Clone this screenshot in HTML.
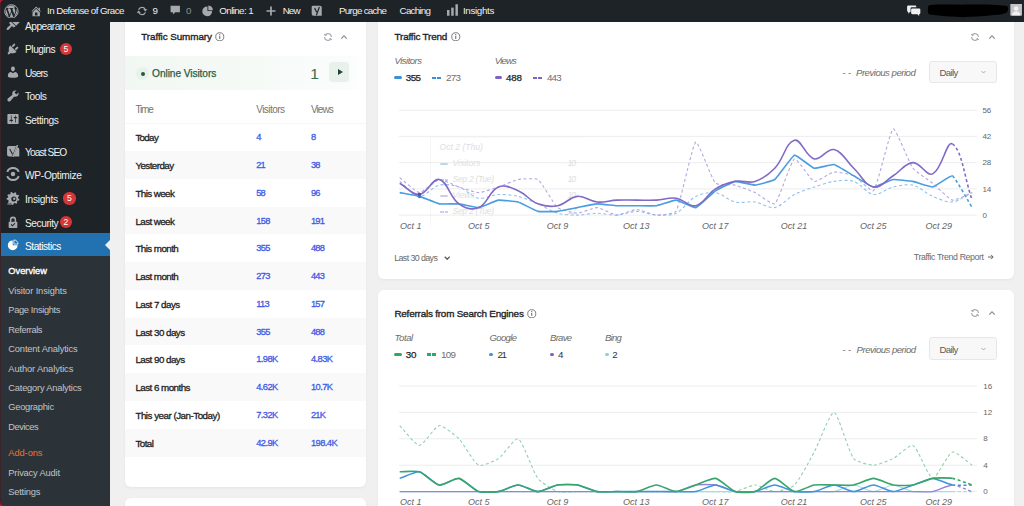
<!DOCTYPE html><html><head><meta charset="utf-8"><style>
*{margin:0;padding:0;box-sizing:border-box}
html,body{width:1024px;height:506px;overflow:hidden;background:#f0f0f1;font-family:"Liberation Sans",sans-serif}
.t{position:absolute;white-space:nowrap;line-height:1.15}
.abs{position:absolute}
#bar{position:absolute;left:0;top:0;width:1024px;height:21.5px;background:#1d2327}
#side{position:absolute;left:0;top:21.5px;width:110px;height:485px;background:#1d2327}
#sub{position:absolute;left:0;top:256px;width:110px;height:250px;background:#2c3338}
.card{position:absolute;background:#fff;border-radius:6px;box-shadow:0 1px 3px rgba(0,0,0,.05)}
.bw{color:#f0f0f1}
.mi{color:#f0f0f1}
.si{color:#c3c4c7}
.badge{position:absolute;width:12.4px;height:12.4px;border-radius:6.2px;background:#d63638;color:#fff;font-size:8.6px;line-height:12.4px;text-align:center}
.ttl{color:#1d2327;-webkit-text-stroke:.35px #1d2327}
.row{position:absolute;left:124.5px;width:241.5px;height:27.78px}
.lab{color:#1e1e1e;-webkit-text-stroke:.3px #1e1e1e}
.num{color:#3d5be6;-webkit-text-stroke:.3px #3d5be6}
.it{font-style:italic}
</style></head><body>
<div id="barwrap" style="position:absolute;left:0;top:0;width:1024px;height:22px;z-index:10"><div id="bar"></div>
<svg class="abs" style="left:4.4px;top:3.6px" width="14.8" height="14.8" viewBox="0 0 20 20"><circle cx="10" cy="10" r="9.1" fill="none" stroke="#a7aaad" stroke-width="1.3"/><path d="M8.010 14.820L4.960 6.610c.49-.03 1.050-.08 1.050-.08.43-.05.38-1.010-.06-.99 0 0-1.290.1-2.130.1-.15 0-.33 0-.52-.01C4.740 3.460 7.200 2.030 10 2.030c2.090 0 3.990.79 5.410 2.090-.6-.08-1.450.35-1.450 1.420 0 .66.38 1.220.79 1.880.31.54.5 1.220.5 2.210 0 1.340-1.270 4.480-1.270 4.480l-2.710-7.500c.48-.03.75-.16.75-.16.43-.05.38-1.100-.05-1.080 0 0-1.300.11-2.140.11-.78 0-2.110-.11-2.110-.11-.43-.02-.48 1.060-.05 1.080l.84.08 1.120 3.040zM14.030 16.970L16.640 10s.67-1.690.39-3.810c.63 1.140.94 2.420.94 3.810 0 2.960-1.560 5.580-3.940 6.970zM2.680 6.770L6.500 17.250C3.830 15.950 2.030 13.170 2.030 10c0-1.160.2-2.230.65-3.230zM10.130 11.300l2.290 6.250c-.75.27-1.570.42-2.420.42-.72 0-1.410-.11-2.060-.3z" fill="#a7aaad"/></svg>
<svg class="abs" style="left:29.6px;top:4.6px" width="12.4" height="12.4" viewBox="0 0 20 20"><path d="M16 8.500l1.530 1.530-1.060 1.060L10 4.620l-6.470 6.470-1.060-1.060L10 2.500l4 4v-2h2v4zm-6-2.460l6 5.990V18H4v-5.970zM12 17v-5H8v5h4z" fill="#a7aaad"/></svg>
<div class="t bw" style="left:47.00px;top:5.18px;font-size:9.8px;letter-spacing:-0.567px;">In Defense of Grace</div>
<svg class="abs" style="left:135.5px;top:5px" width="12" height="12" viewBox="0 0 20 20"><path d="M10 3a7 7 0 0 1 6.3 4H19l-3.5 4-3.5-4h2.1A5 5 0 0 0 5.2 8.5L3.4 7.6A7 7 0 0 1 10 3zM10 17a7 7 0 0 1-6.3-4H1l3.5-4 3.5 4H5.9a5 5 0 0 0 8.9-1.5l1.8.9A7 7 0 0 1 10 17z" fill="#a7aaad"/></svg>
<div class="t bw" style="left:152.60px;top:5.18px;font-size:9.8px;">9</div>
<svg class="abs" style="left:169.5px;top:5px" width="10.5" height="12" viewBox="0 0 18 20"><path d="M1 1h16v11H9l-4 4v-4H1z" fill="#a7aaad"/></svg>
<div class="t " style="left:186.00px;top:5.18px;font-size:9.8px;color:#8c8f94">0</div>
<svg class="abs" style="left:202px;top:5px" width="11.5" height="11.5" viewBox="0 0 20 20"><path d="M11 1a9 9 0 0 1 8 8h-8z" fill="#a7aaad"/><path d="M9.5 2.5v8h8A8.5 8.5 0 1 1 9.5 2.5z" fill="#a7aaad"/></svg>
<div class="t bw" style="left:219.30px;top:5.18px;font-size:9.8px;letter-spacing:-0.616px;">Online: 1</div>
<svg class="abs" style="left:265.5px;top:5.5px" width="10" height="10" viewBox="0 0 20 20"><path d="M8.3 1h3.4v7.3H19v3.4h-7.3V19H8.3v-7.3H1V8.3h7.3z" fill="#a7aaad"/></svg>
<div class="t bw" style="left:282.70px;top:5.18px;font-size:9.8px;letter-spacing:-0.903px;">New</div>
<svg class="abs" style="left:311.3px;top:4px" width="12" height="13" viewBox="0 0 20 22"><path d="M3 3h12a3 3 0 0 1 3 3v14H4a3 3 0 0 1-3-3V5a2 2 0 0 1 2-2z" fill="#a7aaad"/><path d="M6 7l3.5 7M14 5l-5 14" stroke="#1d2327" stroke-width="2" fill="none"/></svg>
<div class="t bw" style="left:339.00px;top:5.18px;font-size:9.8px;letter-spacing:-0.703px;">Purge cache</div>
<div class="t bw" style="left:399.60px;top:5.18px;font-size:9.8px;letter-spacing:-0.776px;">Caching</div>
<svg class="abs" style="left:446.5px;top:3.5px" width="11.5" height="12" viewBox="0 0 12 12"><rect x="0" y="6" width="2.6" height="6" fill="#a7aaad"/><rect x="4.4" y="3.5" width="2.6" height="8.5" fill="#a7aaad"/><rect x="8.8" y="0" width="2.6" height="12" fill="#a7aaad"/></svg>
<div class="t bw" style="left:463.00px;top:5.18px;font-size:9.8px;letter-spacing:-0.353px;">Insights</div>
<svg class="abs" style="left:906.5px;top:4.5px" width="14" height="11.5" viewBox="0 0 24 20"><path d="M2 1h12a2 2 0 0 1 2 2v1H8a2 2 0 0 0-2 2v6H5l-3 3v-3a2 2 0 0 1-2-2V3a2 2 0 0 1 2-2z" fill="#f0f0f1"/><path d="M9 6h12a2 2 0 0 1 2 2v6a2 2 0 0 1-2 2v3l-3-3H9a2 2 0 0 1-2-2V8a2 2 0 0 1 2-2z" fill="#f0f0f1"/></svg>
<svg class="abs" style="left:926px;top:3px" width="84" height="16" viewBox="0 0 84 16"><path d="M3 2.2C14 1.2 30 1.8 44 1.6 58 1.4 70 1.8 80 2.8 82.500 3.600 82.600 6 81.600 8.200 80.600 10.600 76 11.400 70 11.800 64 12.200 58 13.400 50 13.600 42 13.800 38 14.600 30 13.800 22 13.400 12 12.600 5 11.800 2 11.400 1.600 9 2 6.200 2.200 4 2 2.600 3 2.200z" fill="#000"/></svg>
<svg class="abs" style="left:1010px;top:4.2px" width="12.3" height="11.6" viewBox="0 0 12 12"><rect width="12" height="12" fill="#c3c4c7"/><circle cx="6" cy="4.6" r="2.4" fill="#f0f0f1"/><path d="M1.5 12c0-3 2-4.6 4.5-4.6s4.5 1.6 4.5 4.6z" fill="#f0f0f1"/></svg>
</div>
<div id="side"></div>
<div id="sub"></div>
<div class="abs" style="left:0;top:232.9px;width:110px;height:23.2px;background:#2271b1"></div>
<div class="abs" style="left:105px;top:239.5px;width:0;height:0;border-top:5px solid transparent;border-bottom:5px solid transparent;border-right:5px solid #f0f0f1"></div>
<div class="t mi" style="left:25.00px;top:20.92px;font-size:10.2px;letter-spacing:-0.523px;">Appearance</div>
<div class="t mi" style="left:25.00px;top:44.37px;font-size:10.2px;letter-spacing:-0.459px;">Plugins</div>
<div class="t mi" style="left:25.00px;top:67.72px;font-size:10.2px;letter-spacing:-0.884px;">Users</div>
<div class="t mi" style="left:25.00px;top:91.42px;font-size:10.2px;letter-spacing:-0.503px;">Tools</div>
<div class="t mi" style="left:25.00px;top:114.92px;font-size:10.2px;letter-spacing:-0.437px;">Settings</div>
<div class="t mi" style="left:25.00px;top:147.12px;font-size:10.2px;letter-spacing:-0.903px;">Yoast SEO</div>
<div class="t mi" style="left:25.00px;top:170.32px;font-size:10.2px;letter-spacing:-0.307px;">WP-Optimize</div>
<div class="t mi" style="left:25.00px;top:194.12px;font-size:10.2px;letter-spacing:-0.279px;">Insights</div>
<div class="t mi" style="left:25.00px;top:217.72px;font-size:10.2px;letter-spacing:-0.450px;">Security</div>
<div class="t mi" style="left:25.00px;top:241.22px;font-size:10.2px;letter-spacing:-0.479px;color:#fff">Statistics</div>
<div class="badge" style="left:59.8px;top:43px">5</div>
<div class="badge" style="left:63.2px;top:192.3px">5</div>
<div class="badge" style="left:59.8px;top:215.8px">2</div>
<svg class="abs" style="left:5.6px;top:18.0px" width="14" height="14" viewBox="0 0 20 20"><path d="M14.48 11.06L7.41 3.99l1.5-1.5c.5-.56 2.3-.47 3.51.32 1.21.8 1.43 1.28 2.91 2.1 1.18.64 2.45 1.26 4.45.85zm-.71.71L6.7 4.7 4.93 6.47c-.39.39-.39 1.02 0 1.41l1.06 1.06c.39.39.39 1.03 0 1.42-.6.6-1.43 1.110-2.21 1.69-.35.26-.7.53-1.01.84C1.43 14.23.4 16.08 1.2 16.89c.8.79 2.65-.25 4.03-1.62.29-.3.56-.63.81-.97.58-.79 1.09-1.64 1.7-2.25.39-.39 1.03-.39 1.42 0L10.22 13.1c.39.39 1.02.39 1.41 0z" fill="#a7aaad"/></svg>
<svg class="abs" style="left:5.6px;top:41.5px" width="14" height="14" viewBox="0 0 20 20"><path d="M13.11 4.36L9.87 7.6 8 5.73l3.24-3.24c.35-.34 1.05-.2 1.56.32.52.51.66 1.21.31 1.55zm-8 1.77l.91-1.12 9.01 9.01-1.19.84c-.71.71-2.63 1.16-3.82 1.16H6.14L4.9 17.26c-.59.59-1.54.59-2.12 0-.59-.58-.59-1.53 0-2.12l1.24-1.24v-3.88c0-1.130.4-3.19 1.09-3.89zm7.26 3.97l3.24-3.24c.34-.35 1.04-.21 1.55.31.52.51.66 1.21.31 1.55l-3.24 3.25z" fill="#a7aaad"/></svg>
<svg class="abs" style="left:5.6px;top:64.8px" width="14" height="14" viewBox="0 0 20 20"><path d="M10 9.25c-2.27 0-2.73-3.44-2.73-3.44C7 4.02 7.82 2 9.97 2c2.16 0 2.980 2.02 2.71 3.81 0 0-.41 3.44-2.68 3.44zm0 2.57L12.72 10c2.39 0 4.52 2.33 4.52 4.53v2.49s-3.65 1.13-7.24 1.13c-3.65 0-7.24-1.13-7.24-1.13v-2.49c0-2.25 1.94-4.48 4.47-4.48z" fill="#a7aaad"/></svg>
<svg class="abs" style="left:5.6px;top:88.5px" width="14" height="14" viewBox="0 0 20 20"><path d="M16.68 9.77c-1.34 1.34-3.3 1.67-4.95.99l-5.410 6.52c-.99.99-2.59.99-3.58 0s-.99-2.59 0-3.57l6.52-5.42c-.68-1.65-.35-3.61.99-4.95 1.28-1.28 3.12-1.62 4.72-1.06l-2.89 2.89 2.82 2.82 2.86-2.87c.53 1.58.18 3.39-1.08 4.65z" fill="#a7aaad"/></svg>
<svg class="abs" style="left:5.6px;top:112.0px" width="14" height="14" viewBox="0 0 20 20"><path d="M18 16V4c0-.55-.45-1-1-1H3c-.55 0-1 .45-1 1v12c0 .55.45 1 1 1h14c.55 0 1-.45 1-1zM8 11h1c.55 0 1 .45 1 1s-.45 1-1 1H8v1.5c0 .28-.22.5-.5.5s-.5-.22-.5-.5V13H6c-.55 0-1-.45-1-1s.45-1 1-1h1V5.5c0-.28.22-.5.5-.5s.5.22.5.5V11zm5-2h-1c-.55 0-1-.45-1-1s.45-1 1-1h1V5.5c0-.28.22-.5.5-.5s.5.22.5.5V7h1c.55 0 1 .45 1 1s-.45 1-1 1h-1v5.5c0 .28-.22.5-.5.5s-.5-.22-.5-.5V9z" fill="#a7aaad" fill-rule="evenodd"/></svg>
<svg class="abs" style="left:5.6px;top:144.2px" width="14" height="14" viewBox="0 0 20 20"><path d="M4 3h10.500L8.500 18H4.500A3 3 0 0 1 1.500 15V5.500A2.500 2.500 0 0 1 4 3zM16 5h.5A2.500 2.500 0 0 1 19 7.500V18H10.500z" fill="#a7aaad"/><path d="M5.300 7.200l4 7.600M16.200 1.500l-6.800 17.200" stroke="#1d2327" stroke-width="1.500" fill="none"/><path d="M15.300 1.500h2.200l-6.600 17h-2.100" fill="#a7aaad"/></svg>
<svg class="abs" style="left:5.6px;top:167.4px" width="14" height="14" viewBox="0 0 20 20"><path d="M1.800 7A8.800 8.800 0 0 1 18.200 7M18.200 13A8.800 8.800 0 0 1 1.800 13" fill="none" stroke="#a7aaad" stroke-width="2.800"/><circle cx="10" cy="10" r="3.200" fill="#a7aaad"/></svg>
<svg class="abs" style="left:5.6px;top:191.2px" width="14" height="14" viewBox="0 0 20 20"><path d="M17.20,10.40 L19.11,11.68 L18.65,13.55 L16.36,13.78 L15.52,15.03 L16.16,17.24 L14.60,18.37 L12.70,17.08 L11.25,17.49 L10.32,19.59 L8.40,19.46 L7.78,17.25 L6.40,16.64 L4.34,17.65 L2.95,16.31 L3.89,14.22 L3.23,12.86 L1.00,12.31 L0.80,10.40 L2.87,9.40 L3.23,7.94 L1.88,6.08 L2.95,4.49 L5.18,5.05 L6.40,4.16 L6.55,1.87 L8.40,1.34 L9.75,3.20 L11.25,3.31 L12.84,1.65 L14.60,2.43 L14.43,4.73 L15.52,5.77 L17.80,5.52 L18.65,7.25 L17.04,8.90Z" fill="#a7aaad"/><circle cx="11.200" cy="11.400" r="3.600" fill="#1d2327"/><circle cx="11.800" cy="11" r="1.700" fill="#a7aaad"/><path d="M2 18.500h8" stroke="#a7aaad" stroke-width="1.500"/></svg>
<svg class="abs" style="left:5.6px;top:214.8px" width="14" height="14" viewBox="0 0 20 20"><path d="M14.5 9.5h.8c.5 0 .9.4.9.9v7.200c0 .5-.4.9-.9.9H4.700c-.5 0-.9-.4-.9-.9v-7.2c0-.5.4-.9.9-.9h.8V6.800a4.500 4.500 0 0 1 9 0zm-2.200 0V6.800a2.300 2.300 0 0 0-4.6 0v2.700z" fill="#a7aaad"/><path d="M7.300 13.500l2 2 3.500-3.700" stroke="#1d2327" stroke-width="1.500" fill="none"/></svg>
<svg class="abs" style="left:5.6px;top:238.3px" width="14" height="14" viewBox="0 0 20 20"><path d="M11.300 8.700V2.800A5.900 5.900 0 0 1 17.200 8.700z" fill="none" stroke="#fff" stroke-width="1.200" stroke-linejoin="round"/><path d="M9.600 10.400V3.400A7 7 0 1 0 16.600 10.400z" fill="#fff"/></svg>
<div class="t " style="left:8.30px;top:266.24px;font-size:9.3px;letter-spacing:-0.008px;color:#fff;-webkit-text-stroke:.35px #fff">Overview</div>
<div class="t si" style="left:8.30px;top:285.84px;font-size:9.3px;letter-spacing:-0.114px;">Visitor Insights</div>
<div class="t si" style="left:8.30px;top:305.44px;font-size:9.3px;letter-spacing:-0.346px;">Page Insights</div>
<div class="t si" style="left:8.30px;top:324.84px;font-size:9.3px;letter-spacing:-0.441px;">Referrals</div>
<div class="t si" style="left:8.30px;top:344.44px;font-size:9.3px;letter-spacing:-0.154px;">Content Analytics</div>
<div class="t si" style="left:8.30px;top:363.84px;font-size:9.3px;letter-spacing:-0.112px;">Author Analytics</div>
<div class="t si" style="left:8.30px;top:382.64px;font-size:9.3px;letter-spacing:-0.207px;">Category Analytics</div>
<div class="t si" style="left:8.30px;top:402.34px;font-size:9.3px;letter-spacing:-0.254px;">Geographic</div>
<div class="t si" style="left:8.30px;top:421.84px;font-size:9.3px;letter-spacing:-0.463px;">Devices</div>
<div class="t " style="left:8.30px;top:448.14px;font-size:9.3px;letter-spacing:-0.073px;color:#f0712e">Add-ons</div>
<div class="t si" style="left:8.30px;top:467.84px;font-size:9.3px;letter-spacing:-0.172px;">Privacy Audit</div>
<div class="t si" style="left:8.30px;top:487.14px;font-size:9.3px;letter-spacing:-0.215px;">Settings</div>
<div class="card" style="left:124.5px;top:14px;width:241.5px;height:473px"></div>
<div class="card" style="left:124.5px;top:497.7px;width:241.5px;height:40px"></div>
<div class="t ttl" style="left:141.30px;top:30.89px;font-size:9.9px;letter-spacing:-0.090px;">Traffic Summary</div>
<svg class="abs" style="left:215px;top:31.8px" width="9.5" height="9.5" viewBox="0 0 20 20"><circle cx="10" cy="10" r="8.5" fill="none" stroke="#555" stroke-width="1.6"/><path d="M10 8.5v6" stroke="#555" stroke-width="2"/><circle cx="10" cy="5.6" r="1.2" fill="#555"/></svg>
<svg class="abs" style="left:322.7px;top:31.6px" width="10" height="10" viewBox="0 0 10 10"><path d="M2.100 3.300A3.400 3.400 0 0 1 8.400 5M7.900 6.700A3.400 3.400 0 0 1 1.600 5" fill="none" stroke="#a3a8ae" stroke-width="1.100"/><path d="M1.300 1.900l.9 1.700 1.600-.6M8.700 8.100l-.9-1.700-1.600.6" fill="none" stroke="#a3a8ae" stroke-width="1"/></svg>
<svg class="abs" style="left:339.7px;top:33.6px" width="8" height="6" viewBox="0 0 8 6"><path d="M1.200 4.600L4 1.800l2.800 2.800" fill="none" stroke="#8a9096" stroke-width="1.2"/></svg>
<div class="abs" style="left:124.5px;top:55.7px;width:241.5px;height:34px;background:linear-gradient(90deg,#f1f7f3 0%,#f6faf7 55%,#fbfdfc 94%,#fff 100%)"></div>
<div class="abs" style="left:136.2px;top:67.2px;width:12.8px;height:12.8px;border-radius:50%;background:#e8f2eb"></div>
<div class="abs" style="left:140.6px;top:71.6px;width:4px;height:4px;border-radius:50%;background:#1f5e40"></div>
<div class="t " style="left:152.10px;top:67.62px;font-size:10.2px;letter-spacing:-0.091px;color:#2a5e45;-webkit-text-stroke:.25px #2a5e45">Online Visitors</div>
<div class="t " style="left:310.30px;top:64.74px;font-size:15.5px;letter-spacing:-2.021px;color:#3b6a52">1</div>
<div class="abs" style="left:329.4px;top:61.6px;width:20px;height:20px;border-radius:3.5px;background:#e9f1ec"></div>
<div class="abs" style="left:337.5px;top:68.5px;width:0;height:0;border-top:3.2px solid transparent;border-bottom:3.2px solid transparent;border-left:5px solid #1e4a35"></div>
<div class="t " style="left:135.40px;top:103.90px;font-size:10px;letter-spacing:-1.117px;color:#757575">Time</div>
<div class="t " style="left:256.20px;top:103.90px;font-size:10px;letter-spacing:-0.529px;color:#757575">Visitors</div>
<div class="t " style="left:310.90px;top:103.90px;font-size:10px;letter-spacing:-0.899px;color:#757575">Views</div>
<div class="abs" style="left:124.5px;top:122.7px;width:241.5px;height:1px;background:#f6f6f6"></div>
<div class="t lab" style="left:135.40px;top:132.18px;font-size:9.8px;letter-spacing:-0.688px;">Today</div>
<div class="t num" style="left:256.20px;top:132.24px;font-size:9.3px;letter-spacing:-0.466px;">4</div>
<div class="t num" style="left:310.90px;top:132.24px;font-size:9.3px;letter-spacing:-0.466px;">8</div>
<div class="row" style="top:150.98px;background:#f9f9f9"></div>
<div class="t lab" style="left:135.40px;top:159.96px;font-size:9.8px;letter-spacing:-0.568px;">Yesterday</div>
<div class="t num" style="left:256.20px;top:160.02px;font-size:9.3px;letter-spacing:-0.931px;">21</div>
<div class="t num" style="left:310.90px;top:160.02px;font-size:9.3px;letter-spacing:-0.931px;">38</div>
<div class="t lab" style="left:135.40px;top:187.74px;font-size:9.8px;letter-spacing:-0.580px;">This week</div>
<div class="t num" style="left:256.20px;top:187.80px;font-size:9.3px;letter-spacing:-0.931px;">58</div>
<div class="t num" style="left:310.90px;top:187.80px;font-size:9.3px;letter-spacing:-0.931px;">96</div>
<div class="row" style="top:206.54px;background:#f9f9f9"></div>
<div class="t lab" style="left:135.40px;top:215.52px;font-size:9.8px;letter-spacing:-0.580px;">Last week</div>
<div class="t num" style="left:256.20px;top:215.58px;font-size:9.3px;letter-spacing:-0.698px;">158</div>
<div class="t num" style="left:310.90px;top:215.58px;font-size:9.3px;letter-spacing:-0.698px;">191</div>
<div class="t lab" style="left:135.40px;top:243.30px;font-size:9.8px;letter-spacing:-0.567px;">This month</div>
<div class="t num" style="left:256.20px;top:243.36px;font-size:9.3px;letter-spacing:-0.698px;">355</div>
<div class="t num" style="left:310.90px;top:243.36px;font-size:9.3px;letter-spacing:-0.698px;">488</div>
<div class="row" style="top:262.10px;background:#f9f9f9"></div>
<div class="t lab" style="left:135.40px;top:271.08px;font-size:9.8px;letter-spacing:-0.567px;">Last month</div>
<div class="t num" style="left:256.20px;top:271.14px;font-size:9.3px;letter-spacing:-0.698px;">273</div>
<div class="t num" style="left:310.90px;top:271.14px;font-size:9.3px;letter-spacing:-0.698px;">443</div>
<div class="t lab" style="left:135.40px;top:298.86px;font-size:9.8px;letter-spacing:-0.527px;">Last 7 days</div>
<div class="t num" style="left:256.20px;top:298.92px;font-size:9.3px;letter-spacing:-0.667px;">113</div>
<div class="t num" style="left:310.90px;top:298.92px;font-size:9.3px;letter-spacing:-0.698px;">157</div>
<div class="row" style="top:317.66px;background:#f9f9f9"></div>
<div class="t lab" style="left:135.40px;top:326.64px;font-size:9.8px;letter-spacing:-0.532px;">Last 30 days</div>
<div class="t num" style="left:256.20px;top:326.70px;font-size:9.3px;letter-spacing:-0.698px;">355</div>
<div class="t num" style="left:310.90px;top:326.70px;font-size:9.3px;letter-spacing:-0.698px;">488</div>
<div class="t lab" style="left:135.40px;top:354.42px;font-size:9.8px;letter-spacing:-0.532px;">Last 90 days</div>
<div class="t num" style="left:256.20px;top:354.48px;font-size:9.3px;letter-spacing:-0.547px;">1.98K</div>
<div class="t num" style="left:310.90px;top:354.48px;font-size:9.3px;letter-spacing:-0.547px;">4.83K</div>
<div class="row" style="top:373.22px;background:#f9f9f9"></div>
<div class="t lab" style="left:135.40px;top:382.20px;font-size:9.8px;letter-spacing:-0.540px;">Last 6 months</div>
<div class="t num" style="left:256.20px;top:382.26px;font-size:9.3px;letter-spacing:-0.547px;">4.62K</div>
<div class="t num" style="left:310.90px;top:382.26px;font-size:9.3px;letter-spacing:-0.547px;">10.7K</div>
<div class="t lab" style="left:135.40px;top:409.98px;font-size:9.8px;letter-spacing:-0.499px;">This year (Jan-Today)</div>
<div class="t num" style="left:256.20px;top:410.04px;font-size:9.3px;letter-spacing:-0.547px;">7.32K</div>
<div class="t num" style="left:310.90px;top:410.04px;font-size:9.3px;letter-spacing:-0.745px;">21K</div>
<div class="row" style="top:428.78px;background:#f9f9f9"></div>
<div class="t lab" style="left:135.40px;top:437.76px;font-size:9.8px;letter-spacing:-0.544px;">Total</div>
<div class="t num" style="left:256.20px;top:437.82px;font-size:9.3px;letter-spacing:-0.547px;">42.9K</div>
<div class="t num" style="left:310.90px;top:437.82px;font-size:9.3px;letter-spacing:-0.531px;">198.4K</div>
<div class="card" style="left:377.5px;top:14px;width:636.5px;height:265.3px"></div>
<div class="t ttl" style="left:394.60px;top:30.99px;font-size:9.9px;letter-spacing:-0.185px;">Traffic Trend</div>
<svg class="abs" style="left:451.3px;top:31.9px" width="9.5" height="9.5" viewBox="0 0 20 20"><circle cx="10" cy="10" r="8.5" fill="none" stroke="#555" stroke-width="1.6"/><path d="M10 8.5v6" stroke="#555" stroke-width="2"/><circle cx="10" cy="5.6" r="1.2" fill="#555"/></svg>
<svg class="abs" style="left:970.2px;top:31.5px" width="10" height="10" viewBox="0 0 10 10"><path d="M2.100 3.300A3.400 3.400 0 0 1 8.400 5M7.900 6.700A3.400 3.400 0 0 1 1.600 5" fill="none" stroke="#a3a8ae" stroke-width="1.100"/><path d="M1.300 1.900l.9 1.700 1.600-.6M8.700 8.100l-.9-1.700-1.600.6" fill="none" stroke="#a3a8ae" stroke-width="1"/></svg>
<svg class="abs" style="left:987.7px;top:33.5px" width="8" height="6" viewBox="0 0 8 6"><path d="M1.200 4.600L4 1.800l2.800 2.800" fill="none" stroke="#8a9096" stroke-width="1.2"/></svg>
<div class="t it" style="left:394.60px;top:56.26px;font-size:9.5px;letter-spacing:-0.511px;color:#6b6b6b">Visitors</div>
<div class="t it" style="left:494.80px;top:56.26px;font-size:9.5px;letter-spacing:-0.818px;color:#6b6b6b">Views</div>
<div class="abs" style="left:394.2px;top:76.40px;width:7.5px;height:2.6px;border-radius:1.5px;background:#3b8fd9"></div>
<div class="t " style="left:405.80px;top:71.98px;font-size:9.8px;letter-spacing:-0.576px;color:#1e1e1e;-webkit-text-stroke:.25px #1e1e1e">355</div>
<div class="abs" style="left:432.3px;top:76.60px;width:9.4px;height:2.2px;background:repeating-linear-gradient(90deg,#3b8fd9 0 4px,transparent 4px 5.3px)"></div>
<div class="t " style="left:446.00px;top:71.98px;font-size:9.8px;letter-spacing:-0.676px;color:#6e6e6e">273</div>
<div class="abs" style="left:494.6px;top:76.40px;width:7.5px;height:2.6px;border-radius:1.5px;background:#7d63c9"></div>
<div class="t " style="left:506.00px;top:71.98px;font-size:9.8px;letter-spacing:-0.176px;color:#1e1e1e;-webkit-text-stroke:.25px #1e1e1e">488</div>
<div class="abs" style="left:533.3px;top:76.60px;width:9.4px;height:2.2px;background:repeating-linear-gradient(90deg,#7d63c9 0 4px,transparent 4px 5.3px)"></div>
<div class="t " style="left:547.00px;top:71.98px;font-size:9.8px;letter-spacing:-0.876px;color:#6e6e6e">443</div>
<div class="t " style="left:842.60px;top:67.47px;font-size:9.6px;letter-spacing:-0.181px;color:#707070">- -</div>
<div class="t it" style="left:856.00px;top:67.47px;font-size:9.6px;letter-spacing:-0.493px;color:#6b6b6b">Previous period</div>
<div class="abs" style="left:929.3px;top:60.7px;width:68.2px;height:22.3px;border:1px solid #e6e7ea;border-radius:3px;background:#f8f8f9"></div>
<div class="t " style="left:939.40px;top:67.47px;font-size:9.6px;letter-spacing:-0.635px;color:#5a5a5a">Daily</div>
<svg class="abs" style="left:980.5px;top:70.2px" width="5" height="4" viewBox="0 0 5 4"><path d="M.5 1l2 2 2-2" fill="none" stroke="#999" stroke-width=".8"/></svg>
<svg class="abs" style="left:0;top:0" width="1024" height="506" viewBox="0 0 1024 506"><line x1="399" y1="215.1" x2="977" y2="215.1" stroke="#ededed" stroke-width="1"/><line x1="399" y1="188.9" x2="977" y2="188.9" stroke="#ededed" stroke-width="1"/><line x1="399" y1="162.7" x2="977" y2="162.7" stroke="#ededed" stroke-width="1"/><line x1="399" y1="136.4" x2="977" y2="136.4" stroke="#ededed" stroke-width="1"/><line x1="399" y1="110.2" x2="977" y2="110.2" stroke="#ededed" stroke-width="1"/></svg>
<div class="t " style="left:982.40px;top:210.74px;font-size:8.0px;color:#666">0</div>
<div class="t " style="left:982.40px;top:184.52px;font-size:8.0px;color:#666">14</div>
<div class="t " style="left:982.40px;top:158.30px;font-size:8.0px;color:#666">28</div>
<div class="t " style="left:982.40px;top:132.07px;font-size:8.0px;color:#666">42</div>
<div class="t " style="left:982.40px;top:105.85px;font-size:8.0px;color:#666">56</div>
<div class="t it" style="left:400.00px;top:220.72px;font-size:9.0px;color:#666">Oct 1</div>
<div class="t it" style="left:468.10px;top:220.72px;font-size:9.0px;color:#666">Oct 5</div>
<div class="t it" style="left:546.80px;top:220.72px;font-size:9.0px;color:#666">Oct 9</div>
<div class="t it" style="left:623.10px;top:220.72px;font-size:9.0px;color:#666">Oct 13</div>
<div class="t it" style="left:702.10px;top:220.72px;font-size:9.0px;color:#666">Oct 17</div>
<div class="t it" style="left:780.80px;top:220.72px;font-size:9.0px;color:#666">Oct 21</div>
<div class="t it" style="left:860.10px;top:220.72px;font-size:9.0px;color:#666">Oct 25</div>
<div class="t it" style="left:925.50px;top:220.72px;font-size:9.0px;color:#666">Oct 29</div>
<div class="abs" style="left:430.4px;top:136.6px;width:155px;height:89.5px;border-left:1px solid rgba(0,0,0,.03);border-top:1px solid rgba(0,0,0,.02)"></div>
<div class="t it" style="left:439.50px;top:143.09px;font-size:8.6px;letter-spacing:0.001px;color:#dedede">Oct 2 (Thu)</div>
<div class="t it" style="left:452.60px;top:159.29px;font-size:8.6px;letter-spacing:-0.048px;color:#dedede">Visitors</div>
<div class="t it" style="left:567.50px;top:159.29px;font-size:8.6px;letter-spacing:-0.966px;color:#dedede">10</div>
<div class="abs" style="left:439.5px;top:162.70px;width:8px;height:2.0px;border-radius:1.5px;background:#b9d9f3"></div>
<div class="t it" style="left:452.60px;top:175.24px;font-size:8.6px;letter-spacing:-0.327px;color:#dedede">Sep 2 (Tue)</div>
<div class="t it" style="left:567.50px;top:175.24px;font-size:8.6px;letter-spacing:-0.966px;color:#dedede">10</div>
<div class="abs" style="left:439.5px;top:178.65px;width:8px;height:2.0px;background:repeating-linear-gradient(90deg,#b9d9f3 0 4px,transparent 4px 5.3px)"></div>
<div class="t it" style="left:452.60px;top:191.19px;font-size:8.6px;letter-spacing:-0.221px;color:#dedede">Views</div>
<div class="t it" style="left:567.50px;top:191.19px;font-size:8.6px;letter-spacing:-0.966px;color:#dedede">10</div>
<div class="abs" style="left:439.5px;top:194.60px;width:8px;height:2.0px;border-radius:1.5px;background:#d3caf0"></div>
<div class="t it" style="left:452.60px;top:207.14px;font-size:8.6px;letter-spacing:-0.327px;color:#dedede">Sep 2 (Tue)</div>
<div class="t it" style="left:567.50px;top:207.14px;font-size:8.6px;letter-spacing:-0.966px;color:#dedede">12</div>
<div class="abs" style="left:439.5px;top:210.55px;width:8px;height:2.0px;background:repeating-linear-gradient(90deg,#d3caf0 0 4px,transparent 4px 5.3px)"></div>
<svg class="abs" style="left:0;top:0" width="1024" height="506" viewBox="0 0 1024 506"><g clip-path="url(#c1)"><path d="M399.70,181.39 C405.62,185.88 413.26,195.78 419.44,196.37 C425.10,196.91 432.86,186.63 439.18,185.13 C444.70,183.82 453.40,185.17 458.92,187.00 C465.24,189.11 472.38,197.05 478.66,198.24 C484.22,199.30 492.44,194.78 498.40,194.50 C504.28,194.22 512.40,195.01 518.14,196.37 C524.25,197.82 532.06,201.38 537.88,203.86 C543.90,206.43 551.41,211.46 557.62,213.23 C563.25,214.83 571.44,215.10 577.36,215.10 C583.28,215.10 591.18,213.23 597.10,213.23 C603.02,213.23 610.96,215.38 616.84,215.10 C622.80,214.82 630.66,211.35 636.58,211.35 C642.50,211.35 650.36,214.82 656.32,215.10 C662.20,215.38 670.93,215.66 676.06,213.23 C682.77,210.04 689.12,199.85 695.80,196.37 C700.97,193.67 709.87,191.82 715.54,192.62 C721.71,193.50 729.06,200.51 735.28,201.99 C740.90,203.32 749.21,201.16 755.02,201.99 C761.06,202.85 769.26,208.65 774.76,207.61 C781.11,206.40 788.24,197.77 794.50,194.50 C800.08,191.58 808.23,189.00 814.24,187.00 C820.08,185.07 827.94,182.25 833.98,181.39 C839.79,180.56 848.34,179.60 853.72,181.39 C860.18,183.53 867.20,193.61 873.46,194.50 C879.04,195.29 887.09,188.45 893.20,187.00 C898.94,185.64 907.42,183.82 912.94,185.13 C919.26,186.63 926.46,193.71 932.68,196.37 C938.30,198.77 946.68,202.53 952.42,201.99 C958.53,201.41 966.24,195.43 972.16,192.62" fill="none" stroke="#8ec2ee" stroke-width="1.1" stroke-dasharray="3 2.5" opacity="1"/><path d="M399.70,177.64 C402.66,179.89 416.41,192.48 419.44,192.62 C422.33,192.76 436.05,179.96 439.18,179.51 C441.97,179.12 455.92,186.01 458.92,187.00 C461.84,187.97 475.70,192.62 478.66,192.62 C481.62,192.62 495.48,187.97 498.40,187.00 C501.40,186.01 515.08,180.09 518.14,179.51 C521.00,178.97 535.72,177.97 537.88,179.51 C541.64,182.19 553.91,204.44 557.62,207.61 C559.84,209.50 574.40,213.23 577.36,213.23 C580.32,213.23 594.18,207.47 597.10,207.61 C600.10,207.75 613.84,214.96 616.84,215.10 C619.76,215.24 633.62,209.48 636.58,209.48 C639.54,209.48 653.33,214.96 656.32,215.10 C659.25,215.24 674.77,213.74 676.06,211.35 C680.69,202.79 692.18,144.63 695.80,142.05 C698.10,140.42 711.41,178.75 715.54,183.26 C717.33,185.21 732.41,184.45 735.28,185.13 C738.33,185.86 752.17,191.27 755.02,192.62 C758.09,194.08 772.89,205.46 774.76,203.86 C778.81,200.40 790.82,161.00 794.50,158.91 C796.74,157.63 810.82,180.25 814.24,181.39 C816.74,182.22 830.89,172.46 833.98,172.02 C836.82,171.62 851.07,174.51 853.72,175.77 C856.99,177.32 871.82,192.69 873.46,190.75 C877.75,185.67 889.67,130.95 893.20,128.94 C895.59,127.58 909.15,163.06 912.94,168.27 C915.07,171.21 929.79,180.93 932.68,183.26 C935.71,185.70 949.15,199.34 952.42,200.12 C955.08,200.75 969.20,193.75 972.16,192.62" fill="none" stroke="#b3a6e3" stroke-width="1.1" stroke-dasharray="3 2.5" opacity="1"/><path d="M399.70,192.62 C401.67,193.00 417.51,195.82 419.44,196.37 C421.46,196.95 437.14,203.47 439.18,203.86 C441.09,204.22 456.96,203.68 458.92,203.86 C460.91,204.05 476.73,207.79 478.66,207.61 C480.68,207.42 496.36,200.41 498.40,200.12 C500.31,199.84 516.26,201.45 518.14,201.99 C520.21,202.58 535.81,210.86 537.88,211.35 C539.75,211.80 555.66,211.54 557.62,211.35 C559.61,211.17 575.39,207.98 577.36,207.61 C579.33,207.23 595.11,203.96 597.10,203.86 C599.06,203.77 614.86,205.64 616.84,205.73 C618.81,205.83 634.61,205.73 636.58,205.73 C638.55,205.73 654.38,206.01 656.32,205.73 C658.33,205.45 674.11,200.02 676.06,200.12 C678.06,200.21 694.03,208.03 695.80,207.61 C697.98,207.09 713.40,192.17 715.54,190.75 C717.34,189.55 733.22,181.68 735.28,181.39 C737.17,181.12 753.07,185.22 755.02,185.13 C757.01,185.04 773.20,180.70 774.76,179.51 C777.15,177.70 792.25,155.80 794.50,155.16 C796.20,154.68 812.10,167.77 814.24,168.27 C816.05,168.70 832.13,164.18 833.98,164.53 C836.07,164.93 851.75,174.64 853.72,175.77 C855.69,176.89 871.41,186.81 873.46,187.00 C875.36,187.19 891.16,179.80 893.20,179.51 C895.11,179.24 911.00,181.02 912.94,181.39 C914.95,181.77 930.81,187.27 932.68,187.00 C934.75,186.71 950.93,174.99 952.42,175.77" fill="none" stroke="#4a9de0" stroke-width="1.6" stroke-linejoin="round" opacity="1"/><path d="M952.42,175.77 C954.88,177.05 970.19,204.42 972.16,207.61" fill="none" stroke="#4a9de0" stroke-width="1.6" stroke-dasharray="3 2.5" opacity="1"/><path d="M399.70,183.26 C407.60,187.75 411.89,195.21 419.44,194.50 C427.68,193.72 432.21,177.86 439.18,179.51 C448.00,181.60 449.30,197.01 458.92,203.86 C465.09,208.25 472.13,210.39 478.66,207.61 C487.93,203.65 489.13,190.96 498.40,187.00 C504.93,184.22 510.89,187.66 518.14,190.75 C526.69,194.40 529.28,200.60 537.88,203.86 C545.07,206.59 550.11,207.16 557.62,205.73 C565.90,204.16 569.22,197.14 577.36,196.37 C585.01,195.64 589.07,201.23 597.10,201.99 C604.86,202.73 608.93,200.49 616.84,200.12 C624.72,199.74 628.68,200.12 636.58,200.12 C644.48,200.12 648.44,200.49 656.32,200.12 C664.23,199.74 668.41,197.15 676.06,198.24 C684.20,199.40 688.72,207.42 695.80,205.73 C704.51,203.67 706.83,194.25 715.54,188.88 C722.62,184.51 727.12,182.93 735.28,181.39 C742.91,179.94 747.84,183.77 755.02,181.39 C763.64,178.52 768.31,175.01 774.76,168.27 C784.10,158.52 785.69,142.27 794.50,140.18 C801.48,138.52 805.48,156.83 814.24,158.91 C821.27,160.58 826.95,147.88 833.98,149.54 C842.74,151.62 845.82,160.78 853.72,168.27 C861.62,175.77 864.85,185.37 873.46,187.00 C880.64,188.37 885.47,180.53 893.20,175.77 C901.26,170.79 904.88,163.04 912.94,162.66 C920.67,162.29 926.56,176.80 932.68,173.89 C942.35,169.31 946.48,139.98 952.42,143.93" fill="none" stroke="#8169c6" stroke-width="1.6" stroke-linejoin="round" opacity="1"/><path d="M952.42,143.93 C962.27,150.47 964.26,177.64 972.16,200.12" fill="none" stroke="#8169c6" stroke-width="1.6" stroke-dasharray="3 2.5" opacity="1"/><circle cx="419.44" cy="194.50" r="1.8" fill="#5b43a8"/><circle cx="419.44" cy="196.37" r="1.8" fill="#2a7fc9"/></g><defs><clipPath id="c1"><rect x="390" y="100" width="600" height="120"/></clipPath></defs></svg>
<div class="t " style="left:394.20px;top:252.51px;font-size:8.9px;letter-spacing:-0.606px;color:#6a6a6a">Last 30 days</div>
<svg class="abs" style="left:443.8px;top:255.6px" width="6.4" height="4.4" viewBox="0 0 6.400 4.400"><path d="M.7 .8l2.500 2.500 2.500-2.500" fill="none" stroke="#555" stroke-width="1.200"/></svg>
<div class="t " style="left:913.80px;top:252.10px;font-size:8.8px;letter-spacing:-0.393px;color:#6a6a6a">Traffic Trend Report</div>
<svg class="abs" style="left:988px;top:254px" width="6" height="6" viewBox="0 0 6 6"><path d="M0 3h5M3 .8L5.2 3 3 5.2" fill="none" stroke="#555" stroke-width=".9"/></svg>
<div class="card" style="left:377.5px;top:290.1px;width:636.5px;height:240px"></div>
<div class="t ttl" style="left:394.40px;top:307.79px;font-size:9.9px;letter-spacing:-0.199px;">Referrals from Search Engines</div>
<svg class="abs" style="left:527.4px;top:308.5px" width="9.5" height="9.5" viewBox="0 0 20 20"><circle cx="10" cy="10" r="8.5" fill="none" stroke="#555" stroke-width="1.6"/><path d="M10 8.5v6" stroke="#555" stroke-width="2"/><circle cx="10" cy="5.6" r="1.2" fill="#555"/></svg>
<svg class="abs" style="left:970.3px;top:308.2px" width="10" height="10" viewBox="0 0 10 10"><path d="M2.100 3.300A3.400 3.400 0 0 1 8.400 5M7.900 6.700A3.400 3.400 0 0 1 1.600 5" fill="none" stroke="#a3a8ae" stroke-width="1.100"/><path d="M1.300 1.900l.9 1.700 1.600-.6M8.700 8.100l-.9-1.700-1.600.6" fill="none" stroke="#a3a8ae" stroke-width="1"/></svg>
<svg class="abs" style="left:987.8px;top:310.2px" width="8" height="6" viewBox="0 0 8 6"><path d="M1.200 4.600L4 1.800l2.800 2.800" fill="none" stroke="#8a9096" stroke-width="1.2"/></svg>
<div class="t it" style="left:394.40px;top:333.26px;font-size:9.5px;letter-spacing:-0.362px;color:#6b6b6b">Total</div>
<div class="t it" style="left:489.60px;top:333.26px;font-size:9.5px;letter-spacing:-0.647px;color:#6b6b6b">Google</div>
<div class="t it" style="left:550.00px;top:333.26px;font-size:9.5px;letter-spacing:-0.705px;color:#6b6b6b">Brave</div>
<div class="t it" style="left:605.00px;top:333.26px;font-size:9.5px;letter-spacing:-0.772px;color:#6b6b6b">Bing</div>
<div class="abs" style="left:394.4px;top:353.20px;width:7.2px;height:2.6px;border-radius:1.5px;background:#2ea868"></div>
<div class="t " style="left:405.70px;top:348.68px;font-size:9.8px;letter-spacing:-0.201px;color:#1e1e1e;-webkit-text-stroke:.25px #1e1e1e">30</div>
<div class="abs" style="left:427.4px;top:353.40px;width:9.2px;height:2.2px;background:repeating-linear-gradient(90deg,#2ea868 0 4px,transparent 4px 5.3px)"></div>
<div class="t " style="left:440.90px;top:348.68px;font-size:9.8px;letter-spacing:-0.626px;color:#6e6e6e">109</div>
<div class="abs" style="left:489.4px;top:353.40px;width:3.8px;height:2.2px;border-radius:1.5px;background:#3d93dc"></div>
<div class="t " style="left:497.50px;top:348.68px;font-size:9.8px;letter-spacing:-1.401px;color:#333">21</div>
<div class="abs" style="left:549.8px;top:353.40px;width:3.8px;height:2.2px;border-radius:1.5px;background:#7b60c6"></div>
<div class="t " style="left:557.90px;top:348.68px;font-size:9.8px;color:#333">4</div>
<div class="abs" style="left:604.8px;top:353.40px;width:3.8px;height:2.2px;border-radius:1.5px;background:#8fd0e0"></div>
<div class="t " style="left:612.30px;top:348.68px;font-size:9.8px;color:#333">2</div>
<div class="t " style="left:842.40px;top:343.87px;font-size:9.6px;letter-spacing:-0.181px;color:#707070">- -</div>
<div class="t it" style="left:856.60px;top:343.87px;font-size:9.6px;letter-spacing:-0.515px;color:#6b6b6b">Previous period</div>
<div class="abs" style="left:929.4px;top:337px;width:68.1px;height:22.7px;border:1px solid #e6e7ea;border-radius:3px;background:#f8f8f9"></div>
<div class="t " style="left:939.40px;top:343.87px;font-size:9.6px;letter-spacing:-0.635px;color:#5a5a5a">Daily</div>
<svg class="abs" style="left:980.5px;top:346.8px" width="5" height="4" viewBox="0 0 5 4"><path d="M.5 1l2 2 2-2" fill="none" stroke="#999" stroke-width=".8"/></svg>
<svg class="abs" style="left:0;top:0" width="1024" height="506" viewBox="0 0 1024 506"><line x1="399" y1="491.6" x2="977" y2="491.6" stroke="#ededed" stroke-width="1"/><line x1="399" y1="465.2" x2="977" y2="465.2" stroke="#ededed" stroke-width="1"/><line x1="399" y1="438.8" x2="977" y2="438.8" stroke="#ededed" stroke-width="1"/><line x1="399" y1="412.4" x2="977" y2="412.4" stroke="#ededed" stroke-width="1"/><line x1="399" y1="386.0" x2="977" y2="386.0" stroke="#ededed" stroke-width="1"/><path d="M399.70,425.60 C403.65,429.56 415.49,445.40 419.44,445.40 C423.39,445.40 434.91,426.31 439.18,425.60 C442.81,424.99 455.61,435.48 458.92,438.80 C463.51,443.40 473.82,462.77 478.66,465.20 C481.72,466.73 495.03,460.85 498.40,458.60 C502.93,455.57 515.08,437.27 518.14,438.80 C522.98,441.23 532.74,471.53 537.88,478.40 C540.64,482.09 553.31,490.16 557.62,491.60 C561.20,492.80 573.41,491.60 577.36,491.60 C581.31,491.60 593.15,491.60 597.10,491.60 C601.05,491.60 612.89,491.60 616.84,491.60 C620.79,491.60 632.63,491.60 636.58,491.60 C640.53,491.60 652.37,491.60 656.32,491.60 C660.27,491.60 672.11,491.60 676.06,491.60 C680.01,491.60 691.85,491.60 695.80,491.60 C699.75,491.60 711.59,491.60 715.54,491.60 C719.49,491.60 731.44,492.24 735.28,491.60 C739.33,490.92 751.07,485.00 755.02,485.00 C758.97,485.00 770.81,491.60 774.76,491.60 C778.71,491.60 791.73,487.78 794.50,485.00 C799.62,479.86 810.57,458.75 814.24,452.00 C818.46,444.23 830.28,411.78 833.98,412.40 C838.18,413.10 848.14,451.13 853.72,458.60 C856.03,461.69 869.51,465.20 873.46,465.20 C877.41,465.20 889.51,460.45 893.20,458.60 C897.41,456.49 909.93,443.89 912.94,445.40 C917.82,447.85 928.43,477.69 932.68,478.40 C936.32,479.01 947.83,453.53 952.42,452.00 C955.73,450.89 968.21,462.56 972.16,465.20" fill="none" stroke="#8fd1ad" stroke-width="1.1" stroke-dasharray="3 2.5" opacity="1"/><path d="M399.70,491.60 C403.65,491.60 415.49,491.60 419.44,491.60 C423.39,491.60 435.23,491.60 439.18,491.60 C443.13,491.60 454.97,491.60 458.92,491.60 C462.87,491.60 474.71,491.60 478.66,491.60 C482.61,491.60 494.45,491.60 498.40,491.60 C502.35,491.60 514.19,491.60 518.14,491.60 C522.09,491.60 533.93,491.60 537.88,491.60 C541.83,491.60 553.67,491.60 557.62,491.60 C561.57,491.60 573.41,491.60 577.36,491.60 C581.31,491.60 593.15,491.60 597.10,491.60 C601.05,491.60 612.89,491.60 616.84,491.60 C620.79,491.60 632.63,491.60 636.58,491.60 C640.53,491.60 652.37,491.60 656.32,491.60 C660.27,491.60 672.11,491.60 676.06,491.60 C680.01,491.60 691.85,491.60 695.80,491.60 C699.75,491.60 711.59,491.60 715.54,491.60 C719.49,491.60 731.33,491.60 735.28,491.60 C739.23,491.60 751.07,491.60 755.02,491.60 C758.97,491.60 770.81,491.60 774.76,491.60 C778.71,491.60 790.55,491.60 794.50,491.60 C798.45,491.60 810.29,491.60 814.24,491.60 C818.19,491.60 830.14,492.24 833.98,491.60 C838.03,490.92 849.77,485.00 853.72,485.00 C857.67,485.00 869.51,491.60 873.46,491.60 C877.41,491.60 889.25,485.00 893.20,485.00 C897.15,485.00 908.89,490.92 912.94,491.60 C916.78,492.24 928.73,491.60 932.68,491.60 C936.63,491.60 948.47,491.60 952.42,491.60" fill="none" stroke="#a8dbe6" stroke-width="1.2" stroke-linejoin="round" opacity="1"/><path d="M952.42,491.60 C956.37,491.60 968.21,491.60 972.16,491.60" fill="none" stroke="#a8dbe6" stroke-width="1.2" stroke-dasharray="3 2.5" opacity="1"/><path d="M399.70,491.60 C403.65,491.60 415.49,491.60 419.44,491.60 C423.39,491.60 435.23,491.60 439.18,491.60 C443.13,491.60 454.97,491.60 458.92,491.60 C462.87,491.60 474.71,491.60 478.66,491.60 C482.61,491.60 494.45,491.60 498.40,491.60 C502.35,491.60 514.19,491.60 518.14,491.60 C522.09,491.60 533.93,491.60 537.88,491.60 C541.83,491.60 553.67,491.60 557.62,491.60 C561.57,491.60 573.41,491.60 577.36,491.60 C581.31,491.60 593.15,491.60 597.10,491.60 C601.05,491.60 612.89,491.60 616.84,491.60 C620.79,491.60 632.63,491.60 636.58,491.60 C640.53,491.60 652.37,491.60 656.32,491.60 C660.27,491.60 672.22,492.24 676.06,491.60 C680.11,490.92 691.75,485.68 695.80,485.00 C699.64,484.36 711.70,484.36 715.54,485.00 C719.59,485.68 731.23,490.92 735.28,491.60 C739.12,492.24 751.07,491.60 755.02,491.60 C758.97,491.60 770.81,491.60 774.76,491.60 C778.71,491.60 790.55,491.60 794.50,491.60 C798.45,491.60 810.29,491.60 814.24,491.60 C818.19,491.60 830.03,491.60 833.98,491.60 C837.93,491.60 849.77,491.60 853.72,491.60 C857.67,491.60 869.51,491.60 873.46,491.60 C877.41,491.60 889.25,491.60 893.20,491.60 C897.15,491.60 908.99,491.60 912.94,491.60 C916.89,491.60 928.84,492.24 932.68,491.60 C936.73,490.92 948.47,485.00 952.42,485.00" fill="none" stroke="#9484d8" stroke-width="1.3" stroke-linejoin="round" opacity="1"/><path d="M952.42,485.00 C956.37,485.00 968.21,490.28 972.16,491.60" fill="none" stroke="#9484d8" stroke-width="1.3" stroke-dasharray="3 2.5" opacity="1"/><path d="M399.70,478.40 C403.65,477.08 415.75,471.18 419.44,471.80 C423.65,472.50 434.97,484.30 439.18,485.00 C442.87,485.62 455.23,477.78 458.92,478.40 C463.13,479.10 474.35,490.16 478.66,491.60 C482.24,492.80 494.56,492.24 498.40,491.60 C502.45,490.92 514.19,485.00 518.14,485.00 C522.09,485.00 533.93,491.60 537.88,491.60 C541.83,491.60 553.57,485.68 557.62,485.00 C561.46,484.36 573.52,484.36 577.36,485.00 C581.41,485.68 593.05,490.92 597.10,491.60 C600.94,492.24 612.89,491.60 616.84,491.60 C620.79,491.60 632.63,491.60 636.58,491.60 C640.53,491.60 652.37,491.60 656.32,491.60 C660.27,491.60 672.11,491.60 676.06,491.60 C680.01,491.60 691.96,492.24 695.80,491.60 C699.85,490.92 711.59,485.00 715.54,485.00 C719.49,485.00 731.23,490.92 735.28,491.60 C739.12,492.24 751.18,492.24 755.02,491.60 C759.07,490.92 770.81,485.00 774.76,485.00 C778.71,485.00 790.45,490.92 794.50,491.60 C798.34,492.24 810.40,492.24 814.24,491.60 C818.29,490.92 830.03,485.00 833.98,485.00 C837.93,485.00 849.77,491.60 853.72,491.60 C857.67,491.60 869.51,485.00 873.46,485.00 C877.41,485.00 889.25,491.60 893.20,491.60 C897.15,491.60 908.99,486.32 912.94,485.00 C916.89,483.68 928.73,478.40 932.68,478.40 C936.63,478.40 948.37,484.32 952.42,485.00" fill="none" stroke="#3d93dc" stroke-width="1.5" stroke-linejoin="round" opacity="1"/><path d="M952.42,485.00 C956.26,485.64 968.21,485.00 972.16,485.00" fill="none" stroke="#3d93dc" stroke-width="1.5" stroke-dasharray="3 2.5" opacity="1"/><path d="M399.70,471.80 C403.65,471.80 415.86,470.60 419.44,471.80 C423.75,473.24 434.97,484.30 439.18,485.00 C442.87,485.62 455.23,477.78 458.92,478.40 C463.13,479.10 474.35,490.16 478.66,491.60 C482.24,492.80 494.56,492.24 498.40,491.60 C502.45,490.92 514.19,485.00 518.14,485.00 C522.09,485.00 533.93,491.60 537.88,491.60 C541.83,491.60 553.57,485.68 557.62,485.00 C561.46,484.36 573.52,484.36 577.36,485.00 C581.41,485.68 593.05,490.92 597.10,491.60 C600.94,492.24 612.89,491.60 616.84,491.60 C620.79,491.60 632.74,492.24 636.58,491.60 C640.63,490.92 652.37,485.00 656.32,485.00 C660.27,485.00 672.11,491.60 676.06,491.60 C680.01,491.60 691.85,486.32 695.80,485.00 C699.75,483.68 711.85,477.78 715.54,478.40 C719.75,479.10 730.97,490.16 735.28,491.60 C738.86,492.80 751.44,492.80 755.02,491.60 C759.33,490.16 770.81,478.40 774.76,478.40 C778.71,478.40 790.29,490.90 794.50,491.60 C798.19,492.22 810.19,485.68 814.24,485.00 C818.08,484.36 830.03,485.00 833.98,485.00 C837.93,485.00 849.88,485.64 853.72,485.00 C857.77,484.32 869.51,478.40 873.46,478.40 C877.41,478.40 889.15,484.32 893.20,485.00 C897.04,485.64 909.10,485.64 912.94,485.00 C916.99,484.32 928.63,479.08 932.68,478.40 C936.52,477.76 948.58,477.76 952.42,478.40" fill="none" stroke="#37a56c" stroke-width="1.6" stroke-linejoin="round" opacity="1"/><path d="M952.42,478.40 C956.47,479.08 968.21,483.68 972.16,485.00" fill="none" stroke="#37a56c" stroke-width="1.6" stroke-dasharray="3 2.5" opacity="1"/></svg>
<div class="t " style="left:983.20px;top:487.24px;font-size:8.0px;color:#666">0</div>
<div class="t " style="left:983.20px;top:460.84px;font-size:8.0px;color:#666">4</div>
<div class="t " style="left:983.20px;top:434.44px;font-size:8.0px;color:#666">8</div>
<div class="t " style="left:983.20px;top:408.04px;font-size:8.0px;color:#666">12</div>
<div class="t " style="left:983.20px;top:381.64px;font-size:8.0px;color:#666">16</div>
<div class="t it" style="left:400.00px;top:497.22px;font-size:9.0px;color:#666">Oct 1</div>
<div class="t it" style="left:468.10px;top:497.22px;font-size:9.0px;color:#666">Oct 5</div>
<div class="t it" style="left:546.80px;top:497.22px;font-size:9.0px;color:#666">Oct 9</div>
<div class="t it" style="left:623.10px;top:497.22px;font-size:9.0px;color:#666">Oct 13</div>
<div class="t it" style="left:702.10px;top:497.22px;font-size:9.0px;color:#666">Oct 17</div>
<div class="t it" style="left:780.80px;top:497.22px;font-size:9.0px;color:#666">Oct 21</div>
<div class="t it" style="left:860.10px;top:497.22px;font-size:9.0px;color:#666">Oct 25</div>
<div class="t it" style="left:925.50px;top:497.22px;font-size:9.0px;color:#666">Oct 29</div>
<div class="abs" style="left:0;top:0;width:1px;height:506px;background:#3a2329;z-index:20"></div>
<svg class="abs" style="left:0;top:0;z-index:21" width="6" height="6" viewBox="0 0 6 6"><path d="M0 0H4.500A4.500 4.500 0 0 0 0 4.500z" fill="#c8102e"/></svg>
<svg class="abs" style="left:0;top:500px;z-index:21" width="6" height="6" viewBox="0 0 6 6"><path d="M0 6H4.500A4.500 4.500 0 0 1 0 1.500z" fill="#c8102e"/></svg>
</body></html>
